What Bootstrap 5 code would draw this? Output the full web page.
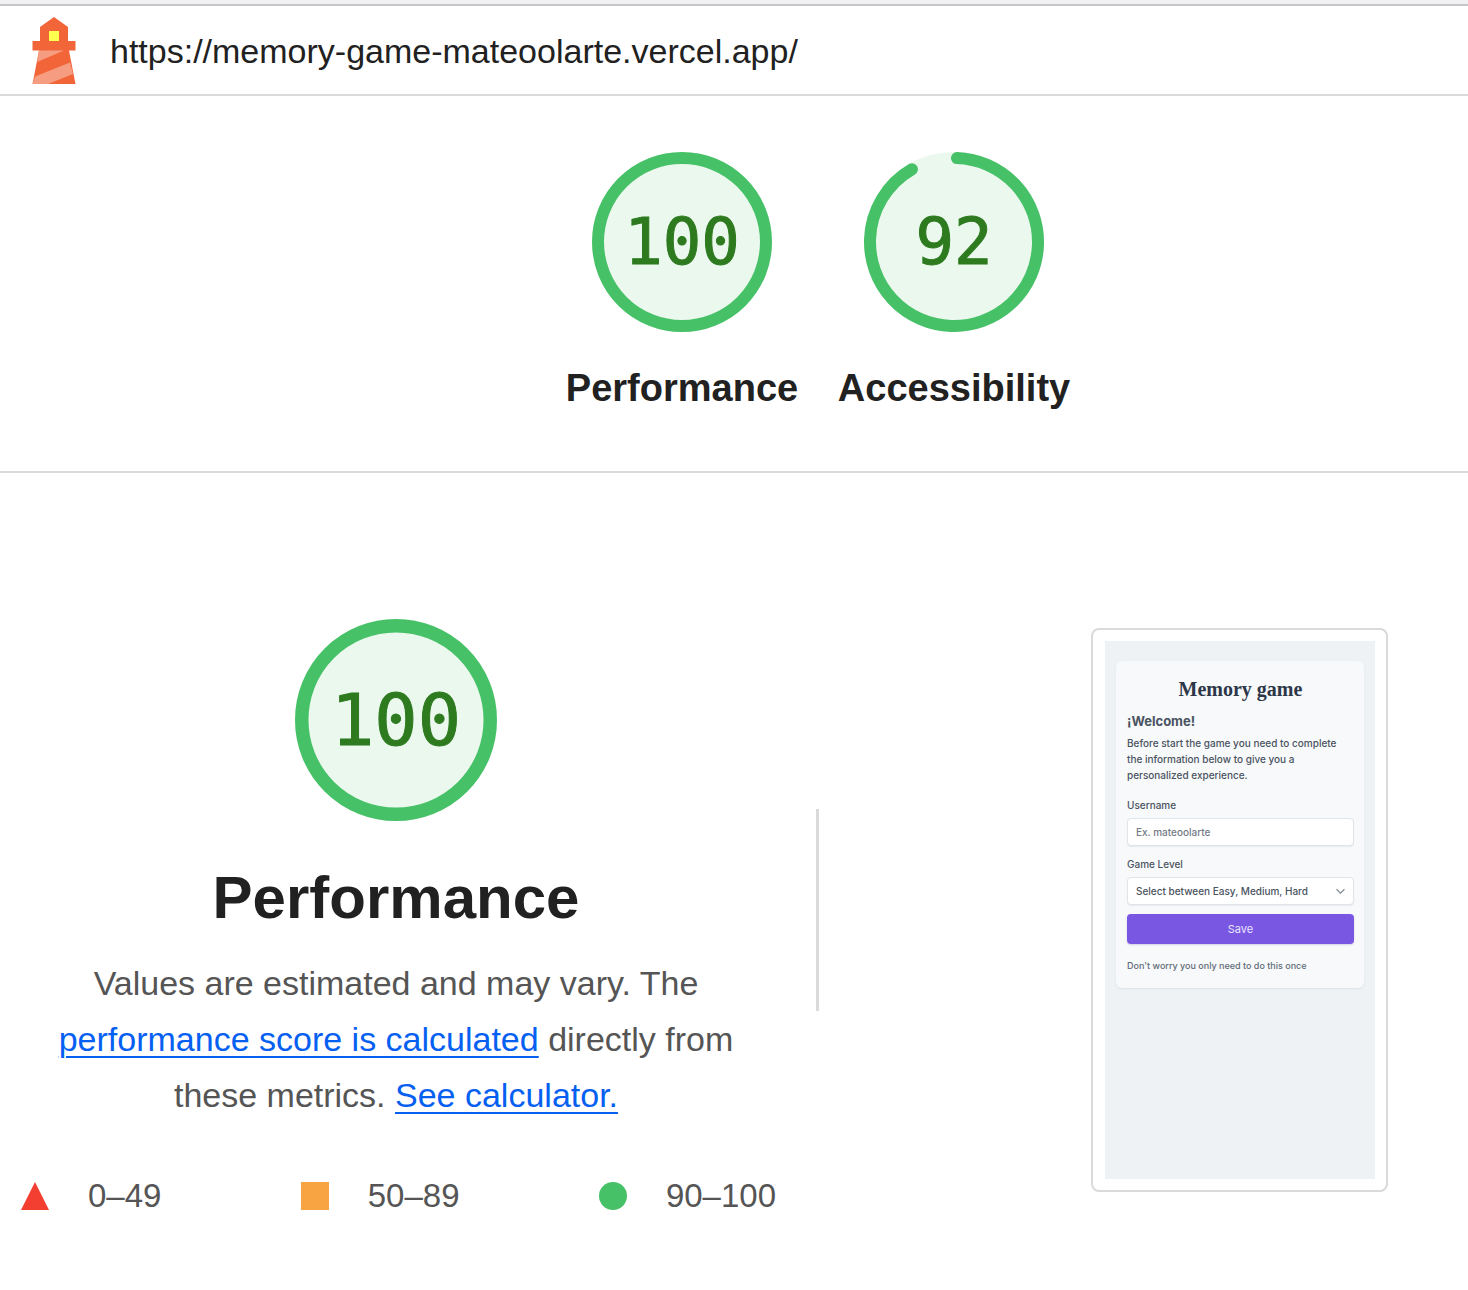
<!DOCTYPE html>
<html lang="en">
<head>
<meta charset="utf-8">
<meta name="viewport" content="width=device-width, initial-scale=1">
<title>Lighthouse report</title>
<link href="https://cdn.jsdelivr.net/npm/bootstrap@5.3.0/dist/css/bootstrap.min.css" rel="stylesheet">
<style>
  body { font-family: "Liberation Sans", Arial, sans-serif; color: #212121; background: #fff; }
  .window-edge { height: 6px; background: #f1f1f1; border-bottom: 2px solid #c5c5ca; }
  .topbar { height: 90px; padding: 2px 32px 0; gap: 34px; border-bottom: 2px solid #dadada; font-size: 34px; }
  .topbar svg { width: 44px; height: 68px; flex: none; }
  .scores { padding: 56px 0 59px 168px; border-bottom: 2px solid #dadada; }
  .score-item { width: 272px; gap: 32px; font-size: 38px; line-height: 48px; color: inherit; }
  .gauge { display: grid; place-items: center; width: 180px; height: 180px; font: 64px/1 "DejaVu Sans Mono", monospace; color: #2d7a1f; -webkit-text-stroke: 1px #2d7a1f; }
  .gauge > * { grid-area: 1 / 1; }
  .gauge svg { width: 100%; height: 100%; }
  .gauge-lg { width: 202px; height: 202px; font-size: 72px; }
  .g-base { fill: #ebf8ee; }
  .g-arc { fill: none; stroke: #47c167; stroke-width: 8; stroke-linecap: round; }
  .report { padding-top: 131px; padding-bottom: 74px; }
  .summary { flex: 0 0 792px; padding-top: 15px; }
  .summary h1 { margin: 41px 0 21px; font-size: 60px; line-height: 72px; font-weight: 700; }
  .summary p { margin: 0; padding: 0 48px; font-size: 34px; line-height: 56px; color: #555; }
  .summary a { color: #0560f2; text-decoration-thickness: 2px; text-underline-offset: 5px; }
  .legend { margin-top: 53px; padding: 0 16px 0 21px; font-size: 33px; line-height: 40px; color: #555; }
  .legend li { gap: 39px; }
  .legend svg { width: 28px; height: 28px; }
  .rule { width: 3px; height: 202px; margin-left: 24px; background: #dadada; flex: none; }
  .preview { padding-right: 80px; }
  .phone-frame { padding: 11px 11px 11px 12px; border: 2px solid #dadada; border-radius: 8px; }
  .phone { width: 270px; height: 538px; padding: 20px 11px; background: #eef2f5; font: 500 10px/16px Inter, sans-serif; color: #4a5361; }
  .game { padding: 16px 10px 14px 11px; background: #f7f9fa; border-radius: 6px; box-shadow: 0 1px 2px #dde2e8; }
  .game h2 { margin: 0 0 12px; font: 700 20px/24px "Liberation Serif", serif; color: #2d3748; text-align: center; }
  .game h3 { margin: 0 0 6px; font-size: 13px; line-height: 16px; font-weight: 700; }
  .game p { margin: 0; }
  .game label { display: block; margin-bottom: 5px; }
  .game .form-control, .game .form-select { height: 28px; min-height: 0; padding: 0 8px; border: 1px solid #e1e5ea; border-radius: 4px; font-size: 10px; line-height: 16px; font-weight: 500; color: #4a5361; box-shadow: 0 1px 1px #e6e9ee; background-color: #fff; }
  .game .form-select { padding: 0 22px 0 8px; background-size: 9px 9px; background-position: right 8px center; background-image: url("data:image/svg+xml,%3csvg xmlns='http://www.w3.org/2000/svg' viewBox='0 0 16 16'%3e%3cpath fill='none' stroke='%23808791' stroke-width='2' d='m1 4 7 7 7-7'/%3e%3c/svg%3e"); }
  .game .form-control::placeholder { color: #737b87; opacity: 1; }
  .game .btn { height: 30px; margin: 9px 0 14px; padding: 0; border: 0; border-radius: 4px; background: #7957e3; color: #ece6fc; font-size: 11px; line-height: 16px; box-shadow: 0 1px 2px #d2cfe5; }
  .field { margin: 14px 0 10px; }
  .game .hint { font-size: 9px; color: #626b78; }
</style>
</head>
<body>
<div class="window-edge"></div>
<header class="topbar d-flex align-items-center">
  <svg viewBox="0 0 44 68" aria-hidden="true">
    <path fill="#f26538" d="M22 0 36 10V24H43.500V33.500H37L43.500 67H.5L7 33.500H.5V24H8V10Z"/>
    <path fill="#f69c80" d="M7 33.500H32L5 45Z M38 45.500 41 57 16 67H.5L3 59.500Z"/>
    <path fill="#ffff4f" d="M17 14H27V24H17Z"/>
  </svg>
  <span>https://memory-game-mateoolarte.vercel.app/</span>
</header>

<section class="scores d-flex justify-content-center">
  <a href="#performance" class="score-item d-flex flex-column align-items-center text-decoration-none fw-bold">
    <span class="gauge">
      <svg viewBox="0 0 120 120"><circle class="g-base" cx="60" cy="60" r="60"/><circle class="g-arc" cx="60" cy="60" r="56"/></svg>
      <span>100</span>
    </span>
    <span>Performance</span>
  </a>
  <a href="#accessibility" class="score-item d-flex flex-column align-items-center text-decoration-none fw-bold">
    <span class="gauge">
      <svg viewBox="0 0 120 120"><circle class="g-base" cx="60" cy="60" r="60"/><circle class="g-arc" cx="60" cy="60" r="56" stroke-dasharray="320 352" transform="rotate(-88 60 60)"/></svg>
      <span>92</span>
    </span>
    <span>Accessibility</span>
  </a>
</section>

<main class="report d-flex align-items-center" id="performance">
  <section class="summary text-center">
    <div class="gauge gauge-lg mx-auto">
      <svg viewBox="0 0 120 120"><circle class="g-base" cx="60" cy="60" r="60"/><circle class="g-arc" cx="60" cy="60" r="56"/></svg>
      <span>100</span>
    </div>
    <h1>Performance</h1>
    <p>Values are estimated and may vary. The <a href="#score">performance score is calculated</a> directly from these metrics. <a href="#calculator">See calculator.</a></p>
    <ul class="legend list-unstyled d-flex justify-content-between mb-0">
      <li class="d-flex align-items-center"><svg viewBox="0 0 28 28"><path fill="#f33f31" d="M14 0 28 28H0Z"/></svg>0–49</li>
      <li class="d-flex align-items-center"><svg viewBox="0 0 28 28"><path fill="#f9a443" d="M0 0H28V28H0Z"/></svg>50–89</li>
      <li class="d-flex align-items-center"><svg viewBox="0 0 28 28"><circle fill="#47c167" cx="14" cy="14" r="14"/></svg>90–100</li>
    </ul>
  </section>
  <div class="rule"></div>
  <aside class="preview flex-grow-1 d-flex justify-content-end">
    <div class="phone-frame">
      <div class="phone">
        <form class="game">
          <h2>Memory game</h2>
          <h3>¡Welcome!</h3>
          <p>Before start the game you need to complete the information below to give you a personalized experience.</p>
          <div class="field">
            <label for="username">Username</label>
            <input class="form-control" id="username" type="text" placeholder="Ex. mateoolarte">
          </div>
          <div>
            <label for="level">Game Level</label>
            <select class="form-select" id="level"><option>Select between Easy, Medium, Hard</option></select>
          </div>
          <button class="btn w-100 d-block" type="button">Save</button>
          <p class="hint">Don't worry you only need to do this once</p>
        </form>
      </div>
    </div>
  </aside>
</main>
<script src="https://cdn.jsdelivr.net/npm/bootstrap@5.3.0/dist/js/bootstrap.bundle.min.js"></script>
</body>
</html>
